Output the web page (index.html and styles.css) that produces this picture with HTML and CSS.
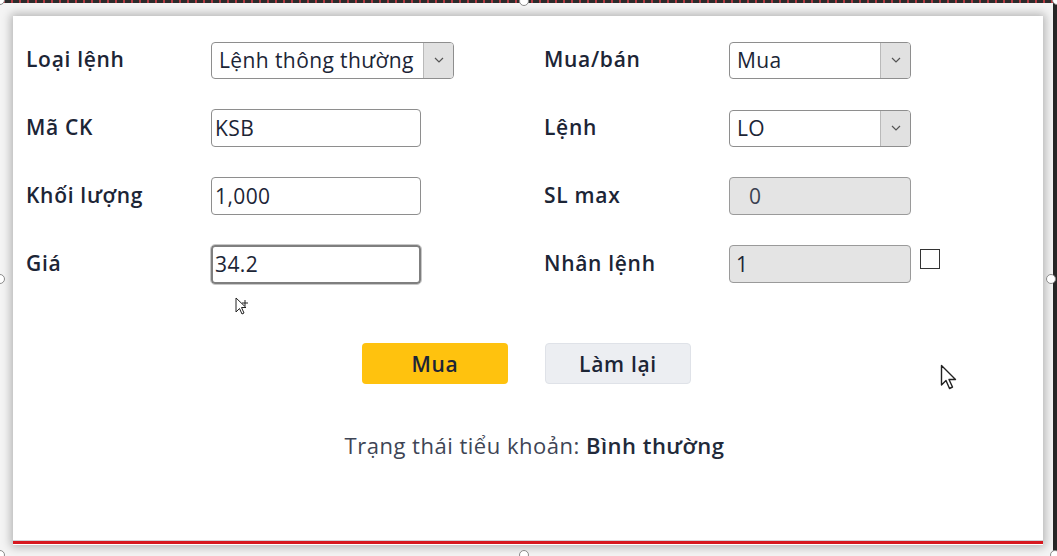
FILE: index.html
```html
<!DOCTYPE html>
<html lang="vi">
<head>
<meta charset="utf-8">
<title>Đặt lệnh</title>
<link rel="stylesheet" href="styles.css">
</head>
<body>
<div class="topstrip"></div>
<div class="rightstrip"></div>
<div class="dialog">
  <div class="form">
    <div class="label">Loại lệnh</div>
    <div class="field"><div class="select wide"><span class="sel-text">Lệnh thông thường</span><span class="sel-arrow"><svg width="12" height="8" viewBox="0 0 12 8"><path d="M2 2 L6 6 L10 2" fill="none" stroke="#555" stroke-width="1.2"/></svg></span></div></div>
    <div class="label">Mua/bán</div>
    <div class="field"><div class="select right"><span class="sel-text">Mua</span><span class="sel-arrow"><svg width="12" height="8" viewBox="0 0 12 8"><path d="M2 2 L6 6 L10 2" fill="none" stroke="#555" stroke-width="1.2"/></svg></span></div></div>

    <div class="label">Mã CK</div>
    <div class="field"><div class="input">KSB</div></div>
    <div class="label">Lệnh</div>
    <div class="field"><div class="select right"><span class="sel-text">LO</span><span class="sel-arrow"><svg width="12" height="8" viewBox="0 0 12 8"><path d="M2 2 L6 6 L10 2" fill="none" stroke="#555" stroke-width="1.2"/></svg></span></div></div>

    <div class="label">Khối lượng</div>
    <div class="field"><div class="input">1,000</div></div>
    <div class="label">SL max</div>
    <div class="field"><div class="input right disabled pad20">0</div></div>

    <div class="label">Giá</div>
    <div class="field"><div class="input focus">34.2</div></div>
    <div class="label">Nhân lệnh</div>
    <div class="field"><div class="input right disabled">1</div><span class="check"></span></div>
  </div>
  <div class="buttons">
    <div class="btn buy">Mua</div>
    <div class="btn reset">Làm lại</div>
  </div>
  <div class="status">Trạng thái tiểu khoản: <b>Bình thường</b></div>
  <div class="redline"></div>
</div>

<svg class="cursor arrow" width="20" height="28" viewBox="0 0 20 28"><path d="M1.5 1.5 L1.5 21 L6 16.5 L9.5 24.5 L12.5 23 L9 15.5 L15.5 15.5 Z" fill="#fff" stroke="#222" stroke-width="1.4" stroke-linejoin="round"/></svg>
<svg class="cursor move" width="18" height="24" viewBox="0 0 18 24"><path d="M1 1 L1 15 L4.5 11.5 L7 17 L9 16 L6.5 10.5 L11 10.5 Z" fill="#fff" stroke="#222" stroke-width="1"/><path d="M10 3 V9 M7 6 H13" stroke="#222" stroke-width="1"/></svg>

<span class="handle h-tl"></span>
<span class="handle h-tm"></span>
<span class="handle h-tr"></span>
<span class="handle h-ml"></span>
<span class="handle h-mr"></span>
<span class="handle h-bl"></span>
<span class="handle h-bm"></span>
<span class="handle h-br"></span>
</body>
</html>
```
FILE: styles.css
```css
html, body {
  margin: 0;
  padding: 0;
}
body {
  width: 1057px;
  height: 556px;
  overflow: hidden;
  background: #f4f4f4;
  font-family: "Open Sans", "Noto Sans", sans-serif;
  color: #1c2536;
  position: relative;
  padding-top: 16px;
  padding-left: 13px;
  box-sizing: border-box;
}
.topstrip {
  position: absolute;
  left: 0;
  top: 0;
  width: 1057px;
  height: 3px;
  background: repeating-linear-gradient(90deg, #2b2b2b 0 3px, #b33a42 3px 5px, #2b2b2b 5px 8px);
}
.rightstrip {
  position: absolute;
  right: 0;
  top: 0;
  width: 4px;
  height: 556px;
  background: #262626;
}
.dialog {
  width: 1030px;
  height: 529px;
  background: #fff;
  box-shadow: 0 0 9px 2px rgba(0,0,0,0.28);
  box-sizing: border-box;
  padding: 25px 0 0 13px;
  display: flex;
  flex-direction: column;
  position: relative;
}
.form {
  display: grid;
  grid-template-columns: 185px 333px 185px 320px;
  grid-auto-rows: 38px;
  row-gap: 30px;
  align-items: center;
}
.label {
  font-weight: 600;
  font-size: 21px;
  letter-spacing: 0.7px;
  margin-top: -3px;
}
.field {
  display: flex;
  align-items: center;
  gap: 9px;
}
.input, .select {
  box-sizing: border-box;
  height: 38px;
  border: 1px solid #8e8e8e;
  border-radius: 4px;
  font-size: 21px;
  letter-spacing: 0.4px;
  display: flex;
  align-items: center;
  background: #fff;
}
.input {
  width: 210px;
  padding-left: 3px;
}
.input.right { width: 182px; }
.input.disabled {
  background: #e4e4e4;
  border-color: #9a9a9a;
  padding-left: 6px;
}
.input.pad20 { padding-left: 19px; color: #3a4150; }
.input.focus {
  border: 2px solid #7f7f7f;
  outline: 1px solid #c8c8c8;
  height: 39px;
  padding-left: 2px;
}
.select {
  height: 37px;
  overflow: hidden;
}
.select.wide { width: 243px; }
.select.right { width: 182px; }
.sel-text {
  flex: 1;
  padding-left: 7px;
  white-space: nowrap;
  overflow: hidden;
}
.sel-arrow {
  width: 29px;
  height: 100%;
  flex: none;
  background: #e1e1e1;
  border-left: 1px solid #b9b9b9;
  display: flex;
  align-items: center;
  justify-content: center;
}
.check {
  width: 20px;
  height: 20px;
  border: 1.5px solid #333;
  box-sizing: border-box;
  background: #fff;
  margin-top: -11px;
}
.buttons {
  display: flex;
  justify-content: center;
  gap: 37px;
  margin-top: 60px;
  margin-left: -16px;
}
.btn {
  width: 146px;
  height: 41px;
  box-sizing: border-box;
  border-radius: 4px;
  font-size: 21px;
  letter-spacing: 0.7px;
  font-weight: 600;
  display: flex;
  align-items: center;
  justify-content: center;
}
.btn.buy {
  background: #ffc20e;
}
.btn.reset {
  background: #eceef2;
  border: 1px solid #dfe2e8;
}
.status {
  margin-top: 46px;
  text-align: center;
  font-size: 22px;
  letter-spacing: 0.5px;
  color: #3e4555;
}
.status b {
  font-weight: 600;
  color: #222a3a;
}
.redline {
  margin-top: auto;
  margin-left: -13px;
  margin-bottom: 1px;
  height: 3px;
  background: #d71920;
  border-top: 1px solid #cfd3d8;
}
.cursor {
  position: absolute;
}
.cursor.arrow { left: 940px; top: 364px; }
.cursor.move { left: 235px; top: 297px; }
.handle {
  position: absolute;
  width: 10px;
  height: 10px;
  border: 1.5px solid #8a8a8a;
  border-radius: 50%;
  background: #fff;
  box-sizing: border-box;
}
.h-tl { left: -5px; top: -5px; }
.h-tm { left: 519px; top: -4px; }
.h-tr { left: 1052px; top: -5px; }
.h-ml { left: -5px; top: 274px; }
.h-mr { left: 1046px; top: 274px; }
.h-bl { left: -5px; top: 550px; }
.h-bm { left: 519px; top: 550px; }
.h-br { left: 1050px; top: 550px; }
```
